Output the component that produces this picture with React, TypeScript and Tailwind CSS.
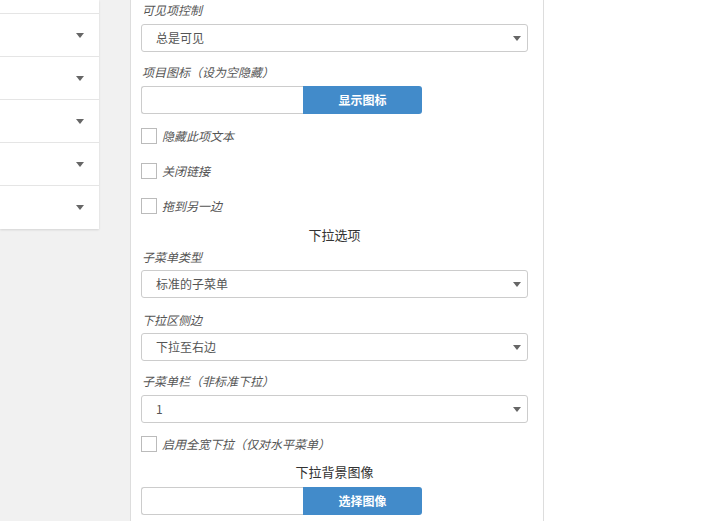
import React from "react";

const font = { fontFamily: '"Noto Sans CJK SC", "Liberation Sans", sans-serif' };

const sideRows = [1, 2, 3, 4, 5];

function Caret({ className = "" }: { className?: string }) {
  return (
    <svg className={className} width="8" height="5" viewBox="0 0 8 5">
      <path d="M0 0h8L4 5z" fill="#666" />
    </svg>
  );
}

function Label({ text, className = "" }: { text: string; className?: string }) {
  return (
    <div className={`h-[18px] leading-[18px] text-[12px] italic text-[#555] pl-[1px] ${className}`}>
      {text}
    </div>
  );
}

function Select({ value, className = "" }: { value: string; className?: string }) {
  return (
    <div
      className={`h-[28px] flex items-center justify-between border border-[#ccc] rounded-[3px] bg-white pl-[14px] pr-[6px] text-[12px] text-[#555] ${className}`}
    >
      <span>{value}</span>
      <Caret className="mt-[1px]" />
    </div>
  );
}

function Check({ text, className = "" }: { text: string; className?: string }) {
  return (
    <div className={`h-[35px] flex items-center gap-[5px] ${className}`}>
      <span className="w-[16px] h-[16px] border border-[#bbb] bg-white" />
      <span className="text-[12px] italic text-[#555]">{text}</span>
    </div>
  );
}

function InputButton({ label, className = "" }: { label: string; className?: string }) {
  return (
    <div className={`flex h-[28px] ${className}`}>
      <div className="w-[162px] border border-[#ccc] border-r-0 rounded-l-[3px] bg-white" />
      <button className="w-[119px] bg-[#428bca] rounded-r-[3px] text-white text-[12px] font-bold">
        {label}
      </button>
    </div>
  );
}

export default function App() {
  return (
    <div className="flex h-[521px] w-[717px] overflow-hidden bg-white" style={font}>
      {/* left gray column with menu items */}
      <div className="w-[130px] shrink-0 bg-[#f1f1f1]">
        <div className="w-[99px] bg-white shadow-[0_1px_2px_rgba(0,0,0,0.12)]">
          <div className="h-[14px] border-b border-[#e5e5e5]" />
          {sideRows.map((r, i) => (
            <div
              key={r}
              className={`h-[43px] flex items-center justify-end pr-[15px] ${
                i < sideRows.length - 1 ? "border-b border-[#e5e5e5]" : ""
              }`}
            >
              <Caret />
            </div>
          ))}
        </div>
      </div>

      {/* settings panel */}
      <div className="w-[414px] shrink-0 border-x border-[#ddd] bg-white pl-[10px] pr-[15px] pt-[1px]">
        <Label text="可见项控制" />
        <Select value="总是可见" className="mt-[5px]" />
        <Label text="项目图标（设为空隐藏）" className="mt-[11px]" />
        <InputButton label="显示图标" className="mt-[5px]" />
        <Check text="隐藏此项文本" className="mt-[4px]" />
        <Check text="关闭链接" />
        <Check text="拖到另一边" />
        <div className="mt-[3px] h-[18px] leading-[18px] text-center text-[13px] text-[#333]">下拉选项</div>
        <Label text="子菜单类型" className="mt-[4px]" />
        <Select value="标准的子菜单" className="mt-[4px]" />
        <Label text="下拉区侧边" className="mt-[13px]" />
        <Select value="下拉至右边" className="mt-[4px]" />
        <Label text="子菜单栏（非标准下拉）" className="mt-[11px]" />
        <Select value="1" className="mt-[5px]" />
        <Check text="启用全宽下拉（仅对水平菜单）" className="mt-[3px]" />
        <div className="mt-[2px] h-[18px] leading-[18px] text-center text-[13px] text-[#333]">下拉背景图像</div>
        <InputButton label="选择图像" className="mt-[6px]" />
      </div>

      <div className="flex-1 bg-white" />
    </div>
  );
}
